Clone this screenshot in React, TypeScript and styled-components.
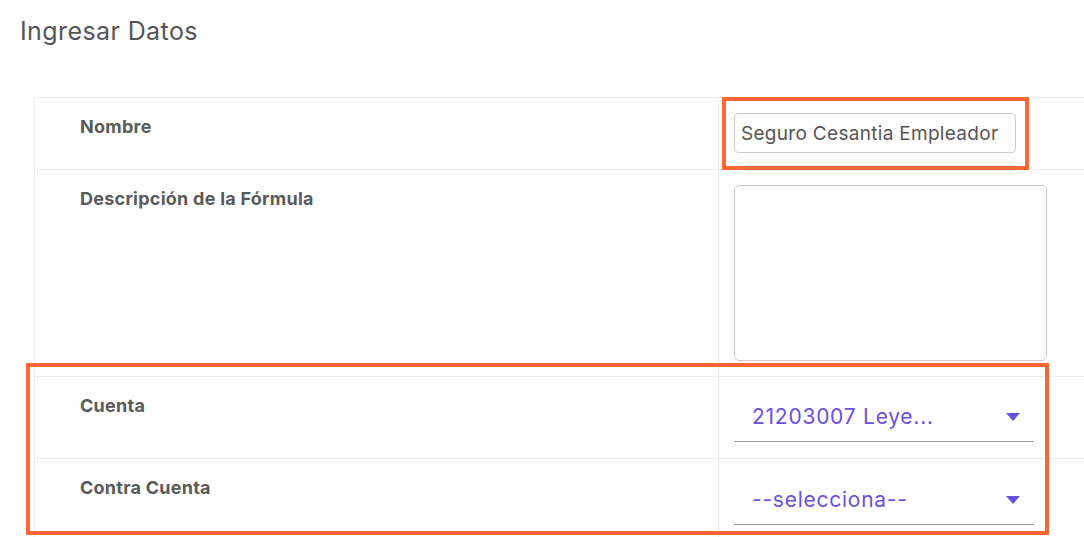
import React from "react";
import styled, { createGlobalStyle } from "styled-components";

const GlobalStyle = createGlobalStyle`
  html, body {
    margin: 0;
    padding: 0;
    background: #ffffff;
    font-family: Inter, "Noto Sans", sans-serif;
    color: #555555;
  }
`;

const Page = styled.div`
  padding: 15px 0 0 0;
  overflow: hidden;
  height: 537px;
  box-sizing: border-box;
`;

const Title = styled.h2`
  margin: 0 0 50px 20px;
  font-size: 25px;
  line-height: 32px;
  font-weight: 400;
  letter-spacing: 0.4px;
  color: #555555;
`;

const FormTable = styled.div`
  position: relative;
  margin-left: 34px;
  border-top: 1px solid #eeeeee;
  border-left: 1px solid #eeeeee;
`;

const Row = styled.div<{ $height: number }>`
  display: grid;
  grid-template-columns: 684px 1fr;
  height: ${(p) => p.$height}px;
  border-bottom: 1px solid #eeeeee;
  box-sizing: border-box;
`;

const LabelCell = styled.div`
  padding: 18px 0 0 45px;
  font-size: 18px;
  line-height: 22px;
  font-weight: 700;
  letter-spacing: 0.25px;
  color: #5a5a5a;
  border-right: 1px solid #eeeeee;
`;

const FieldCell = styled.div<{ $top: number }>`
  padding: ${(p) => p.$top}px 0 0 15px;
`;

const TextInput = styled.input`
  box-sizing: border-box;
  width: 282px;
  height: 40px;
  padding: 0 6px;
  border: 1px solid #cccccc;
  border-radius: 4px;
  font-family: Inter, "Noto Sans", sans-serif;
  font-size: 19px;
  letter-spacing: 0.3px;
  color: #555555;
  outline: none;
`;

const TextArea = styled.textarea`
  box-sizing: border-box;
  display: block;
  width: 313px;
  height: 176px;
  border: 1px solid #cccccc;
  border-radius: 5px;
  resize: none;
  outline: none;
`;

const Select = styled.div`
  box-sizing: border-box;
  width: 300px;
  height: 40px;
  display: flex;
  align-items: center;
  justify-content: space-between;
  padding: 0 14px 10px 18px;
  border-bottom: 1px solid #999999;
  font-size: 21px;
  letter-spacing: 0.75px;
  color: #6a50e0;
`;

const Caret = styled.span`
  width: 0;
  height: 0;
  border-left: 7px solid transparent;
  border-right: 7px solid transparent;
  border-top: 8px solid #6a50e0;
`;

const Highlight = styled.div<{ $x: number; $y: number; $w: number; $h: number }>`
  position: absolute;
  left: ${(p) => p.$x}px;
  top: ${(p) => p.$y}px;
  width: ${(p) => p.$w}px;
  height: ${(p) => p.$h}px;
  border: 4px solid #ff6633;
  box-sizing: border-box;
  pointer-events: none;
`;

export default function App() {
  return (
    <>
      <GlobalStyle />
      <Page>
        <Title>Ingresar Datos</Title>
        <FormTable>
          <Row $height={72}>
            <LabelCell>Nombre</LabelCell>
            <FieldCell $top={15}>
              <TextInput defaultValue="Seguro Cesantia Empleador" />
            </FieldCell>
          </Row>
          <Row $height={207}>
            <LabelCell>Descripción de la Fórmula</LabelCell>
            <FieldCell $top={15}>
              <TextArea />
            </FieldCell>
          </Row>
          <Row $height={82}>
            <LabelCell>Cuenta</LabelCell>
            <FieldCell $top={25}>
              <Select>
                <span>21203007 Leye...</span>
                <Caret />
              </Select>
            </FieldCell>
          </Row>
          <Row $height={100}>
            <LabelCell>Contra Cuenta</LabelCell>
            <FieldCell $top={26}>
              <Select>
                <span>--selecciona--</span>
                <Caret />
              </Select>
            </FieldCell>
          </Row>
          <Highlight $x={687} $y={-1} $w={307} $h={73} />
          <Highlight $x={-9} $y={265} $w={1023} $h={172} />
        </FormTable>
      </Page>
    </>
  );
}
